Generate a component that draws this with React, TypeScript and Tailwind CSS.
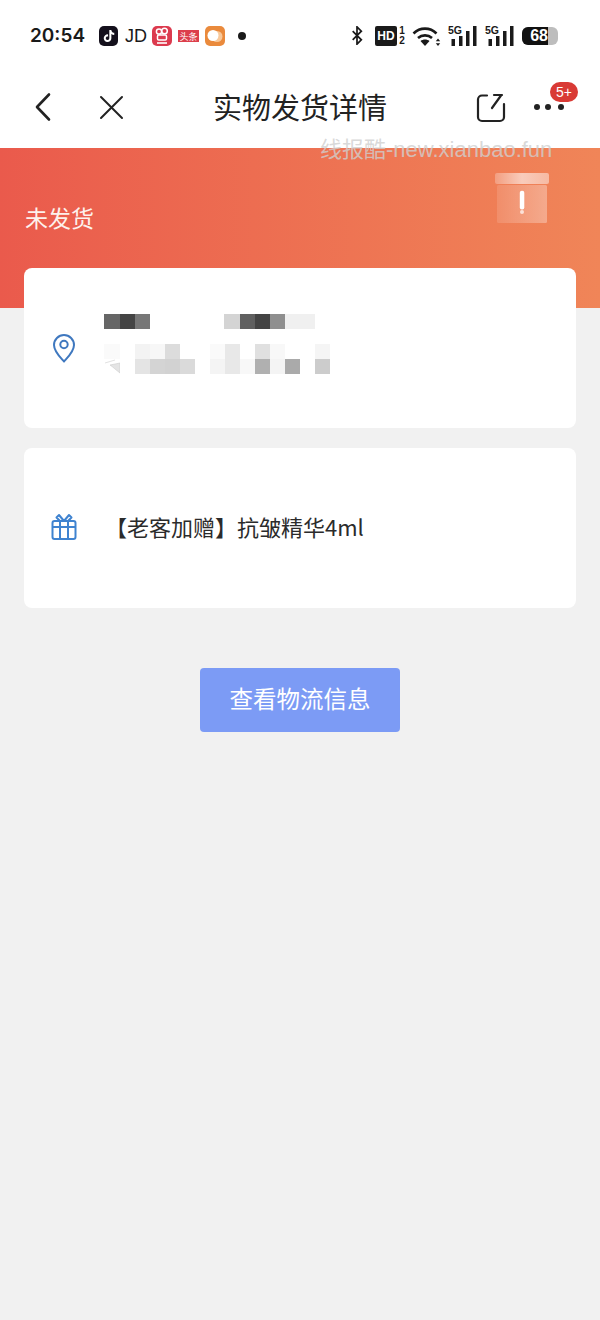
import type { ReactNode } from 'react'
import { FaTiktok } from 'react-icons/fa6'

const cjk = { fontFamily: '"Noto Sans CJK SC", "Noto Sans", sans-serif' }
const latin = { fontFamily: '"Liberation Sans", sans-serif' }

// mosaic cells of the blurred address: x, y, w, colour
const mosaic: [number, number, number, string][] = [
  [0, 0, 16, '#666666'],
  [16, 0, 15, '#444444'],
  [31, 0, 15, '#777777'],
  [120, 0, 16, '#d4d4d4'],
  [136, 0, 15, '#606060'],
  [151, 0, 15, '#444444'],
  [166, 0, 15, '#8f8f8f'],
  [181, 0, 30, '#f0f0f0'],
  [0, 30, 16, '#fafafa'],
  [31, 30, 15, '#f3f3f3'],
  [46, 30, 15, '#f7f7f7'],
  [61, 30, 15, '#dcdcdc'],
  [106, 30, 15, '#fafafa'],
  [121, 30, 15, '#e8e8e8'],
  [151, 30, 15, '#e0e0e0'],
  [166, 30, 15, '#f8f8f8'],
  [211, 30, 15, '#f5f5f5'],
  [31, 45, 15, '#e4e4e4'],
  [46, 45, 15, '#d4d4d4'],
  [61, 45, 15, '#d2d2d2'],
  [76, 45, 15, '#dadada'],
  [106, 45, 15, '#f4f4f4'],
  [121, 45, 15, '#e8e8e8'],
  [136, 45, 15, '#f8f8f8'],
  [151, 45, 15, '#b0b0b0'],
  [166, 45, 15, '#f4f4f4'],
  [181, 45, 15, '#aaaaaa'],
  [211, 45, 15, '#cccccc'],
]

const Signal = () => (
  <div className="relative h-[20px] w-[30px]">
    <span className="absolute left-0 top-[-1px] text-[10.500px] font-bold leading-[11px] text-[#1a1a1a]" style={latin}>
      5G
    </span>
    <svg width="30" height="20" viewBox="0 0 30 20" fill="#1a1a1a">
      <rect x="3.500" y="13" width="3.500" height="7" />
      <rect x="11" y="10" width="3.500" height="10" />
      <rect x="18" y="5" width="3.500" height="15" />
      <rect x="25" y="0" width="3.500" height="20" />
    </svg>
  </div>
)

const StatusBar = () => (
  <div className="flex h-[68px] items-start bg-white pl-[30px] pt-[26px]">
    <span className="w-[69px] text-[19px] font-semibold leading-[20px] text-[#1a1a1a]" style={{ fontFamily: 'Inter, sans-serif' }}>
      20:54
    </span>
    <div className="flex h-[20px] w-[19px] items-center justify-center rounded-[5px] bg-[#14101c] text-white">
      <FaTiktok size={12} />
    </div>
    <span className="ml-[7px] w-[27px] text-[18px] leading-[20px] text-[#1a1a1a]" style={latin}>
      JD
    </span>
    <svg width="20" height="20" viewBox="0 0 20 20" className="shrink-0">
      <rect width="20" height="20" rx="5" fill="#dc3a4e" />
      <circle cx="7" cy="5.500" r="2.600" fill="none" stroke="#fff" strokeWidth="1.500" />
      <circle cx="12.500" cy="5" r="2.800" fill="none" stroke="#fff" strokeWidth="1.500" />
      <rect x="5.500" y="9" width="9" height="5" rx="1.200" fill="none" stroke="#fff" strokeWidth="1.500" />
      <rect x="5" y="16" width="10" height="2" fill="#fff" opacity="0.8" />
    </svg>
    <div className="ml-[6px] mt-[4px] flex h-[12px] w-[21px] items-center justify-center bg-[#dc3f4c] text-[9px] leading-none text-white" style={cjk}>
      头条
    </div>
    <svg width="20" height="20" viewBox="0 0 20 20" className="ml-[6px] shrink-0">
      <rect width="20" height="20" rx="5" fill="#ea8a3c" />
      <circle cx="12" cy="10.500" r="5.500" fill="#f8c89a" />
      <circle cx="8" cy="9.500" r="5.500" fill="#fff" />
    </svg>
    <div className="ml-[13px] mt-[6px] h-[8px] w-[8px] rounded-full bg-[#1a1a1a]" />
    <svg width="14" height="19" viewBox="0 0 14 22" fill="none" stroke="#1a1a1a" strokeWidth="2" className="ml-[104px] shrink-0">
      <path d="M2 6l10 10-5 5V1l5 5L2 16" />
    </svg>
    <div className="ml-[11px] flex h-[20px] w-[22px] items-center justify-center rounded-[2px] bg-[#1a1a1a] text-[12px] font-bold text-white" style={latin}>
      HD
    </div>
    <div className="ml-px flex h-[20px] w-[8px] flex-col items-center text-[10px] font-bold leading-[10px] text-[#1a1a1a]" style={latin}>
      <span>1</span>
      <span>2</span>
    </div>
    <svg width="29" height="22" viewBox="0 0 29 22" fill="none" stroke="#1a1a1a" strokeWidth="2.600" className="ml-[6px] shrink-0">
      <path d="M1.500 7.500C8 1 18 1 24.500 7.500" />
      <path d="M6 12C10 8.500 16 8.500 20 12" />
      <path d="M13 20l-4.500-5c2.500-2 6.500-2 9 0z" fill="#1a1a1a" stroke="none" />
      <path d="M26 12.500l2.200 2.800h-4.400zM26 20l2.200-2.800h-4.400z" fill="#1a1a1a" stroke="none" />
    </svg>
    <div className="ml-[7px]">
      <Signal />
    </div>
    <div className="ml-[7px]">
      <Signal />
    </div>
    <div className="ml-[7px] mt-px flex h-[18px] w-[36px] overflow-hidden rounded-[6px] bg-[#bdbdbd]">
      <div className="flex h-full w-[26px] items-center justify-end bg-[#111111] text-[16px] font-bold leading-none text-white" style={latin}>
        <span>68</span>
      </div>
    </div>
  </div>
)

const NavBar = () => (
  <div className="relative flex h-[80px] items-center justify-center bg-white">
    <svg width="30" height="40" viewBox="0 0 30 40" fill="none" stroke="#222222" strokeWidth="2.600" strokeLinecap="round" strokeLinejoin="round" className="absolute left-[29px] top-[19px]">
      <path d="M20 7.500L8 20l12 12.500" />
    </svg>
    <svg width="30" height="30" viewBox="0 0 30 30" fill="none" stroke="#222222" strokeWidth="2" strokeLinecap="round" className="absolute left-[97px] top-[24px]">
      <path d="M4 5l21 21M25 5L4 26" />
    </svg>
    <span className="mb-[4px] text-[29px] leading-[40px] text-[#222222]" style={cjk}>
      实物发货详情
    </span>
    <svg width="32" height="32" viewBox="0 0 32 32" fill="none" stroke="#222222" strokeWidth="2.200" strokeLinecap="round" strokeLinejoin="round" className="absolute left-[475px] top-[25px]">
      <path d="M12 2.500H7a4 4 0 0 0-4 4V24a4 4 0 0 0 4 4h18a4 4 0 0 0 4-4V11" />
      <path d="M17 15l9-12.500M19 2h8" />
    </svg>
    <div className="absolute left-[534px] top-[36px] h-[6px] w-[6px] rounded-full bg-[#222222]" />
    <div className="absolute left-[545px] top-[36px] h-[6px] w-[6px] rounded-full bg-[#222222]" />
    <div className="absolute left-[558px] top-[36px] h-[6px] w-[6px] rounded-full bg-[#222222]" />
    <div className="absolute left-[550px] top-[14px] flex h-[20px] w-[28px] items-center justify-center rounded-full bg-[#d93a35] text-[14px] leading-none text-white" style={latin}>
      5+
    </div>
  </div>
)

const Banner = () => (
  <div className="relative flex h-[160px] justify-between bg-gradient-to-r from-[#ea5a4c] to-[#f08558] pl-[25px] pr-[50px] pt-[52px]">
    <span className="text-[23px] leading-[34px] text-[#fdf1ec]" style={cjk}>
      未发货
    </span>
    <svg width="56" height="52" viewBox="0 0 56 52" className="-mt-[28px] shrink-0">
      <defs>
        <linearGradient id="lid" x1="0" x2="1" y1="0" y2="0">
          <stop offset="0" stopColor="#fff" stopOpacity="0.25" />
          <stop offset="0.5" stopColor="#fff" stopOpacity="0.6" />
          <stop offset="1" stopColor="#fff" stopOpacity="0.45" />
        </linearGradient>
        <linearGradient id="body" x1="0" x2="1" y1="0" y2="0">
          <stop offset="0" stopColor="#fff" stopOpacity="0.12" />
          <stop offset="1" stopColor="#fff" stopOpacity="0.32" />
        </linearGradient>
      </defs>
      <rect x="1" y="1" width="54" height="11" rx="2" fill="url(#lid)" />
      <rect x="3" y="13" width="50" height="38" rx="1.500" fill="url(#body)" />
      <rect x="25.800" y="18.700" width="4.500" height="18.700" rx="2" fill="#fff" />
      <circle cx="28" cy="40" r="2" fill="#fff" opacity="0.7" />
    </svg>
  </div>
)

const Card = ({ icon, children }: { icon: ReactNode; children: ReactNode }) => (
  <div className="relative flex h-[160px] items-center rounded-[8px] bg-white pl-[27px]">
    <div className="flex w-[26px] shrink-0 justify-center">{icon}</div>
    {children}
  </div>
)

const PinIcon = () => (
  <svg width="24" height="30" viewBox="0 0 24 30" fill="none" stroke="#3f78bf" strokeWidth="2">
    <path d="M12 28.500C8 24 2 18.500 2 12a10 10 0 0 1 20 0c0 6.500-6 12-10 16.500z" strokeLinejoin="round" />
    <circle cx="12" cy="11.500" r="3.700" />
  </svg>
)

const GiftIcon = () => (
  <svg width="26" height="27" viewBox="0 0 26 27" fill="none" stroke="#3f83d0" strokeWidth="2" strokeLinejoin="round" className="mb-[4px]">
    <rect x="1.500" y="8" width="23" height="18" rx="2" />
    <path d="M1.500 14h23M9 8v18M17 8v18" />
    <path d="M13 8L8 2 5.500 4.500 9 8M13 8l5-6 2.500 2.500L17 8" />
  </svg>
)

export default function App() {
  return (
    <div className="relative h-[1320px] w-[600px] overflow-hidden bg-[#f1f1f1]" style={cjk}>
      <StatusBar />
      <NavBar />
      <Banner />
      <span className="absolute left-[320px] top-[136px] text-[22px] leading-[28px] text-[#cfcfcf]/80" style={{ fontFamily: '"Liberation Sans", "Noto Sans CJK SC", sans-serif' }}>
        线报酷-new.xianbao.fun
      </span>

      <div className="relative -mt-[40px] flex flex-col gap-[20px] px-[24px]">
        <Card icon={<PinIcon />}>
          <div className="relative -mt-[8px] ml-[27px] h-[60px] w-[226px]">
            {mosaic.map(([x, y, w, c], i) => (
              <div key={i} className="absolute h-[15px]" style={{ left: x, top: y, width: w, backgroundColor: c }} />
            ))}
            <svg width="16" height="15" viewBox="0 0 16 15" className="absolute left-0 top-[45px]">
              <path d="M1 4l10-3M16 4v10C12 11 9 8 6 6z" fill="#e4e4e4" stroke="#cccccc" strokeWidth="0.600" />
            </svg>
          </div>
        </Card>
        <Card icon={<GiftIcon />}>
          <span className="mb-[4px] ml-[28px] text-[22px] leading-[32px] text-[#2b2b2b]" style={cjk}>
            【老客加赠】抗皱精华4ml
          </span>
        </Card>
      </div>

      <div className="mt-[60px] flex justify-center">
        <button className="flex h-[64px] w-[200px] items-center justify-center rounded-[4px] bg-[#7c9bf5] pb-[2px] text-[23.500px] text-white" style={cjk}>
          查看物流信息
        </button>
      </div>
    </div>
  )
}
